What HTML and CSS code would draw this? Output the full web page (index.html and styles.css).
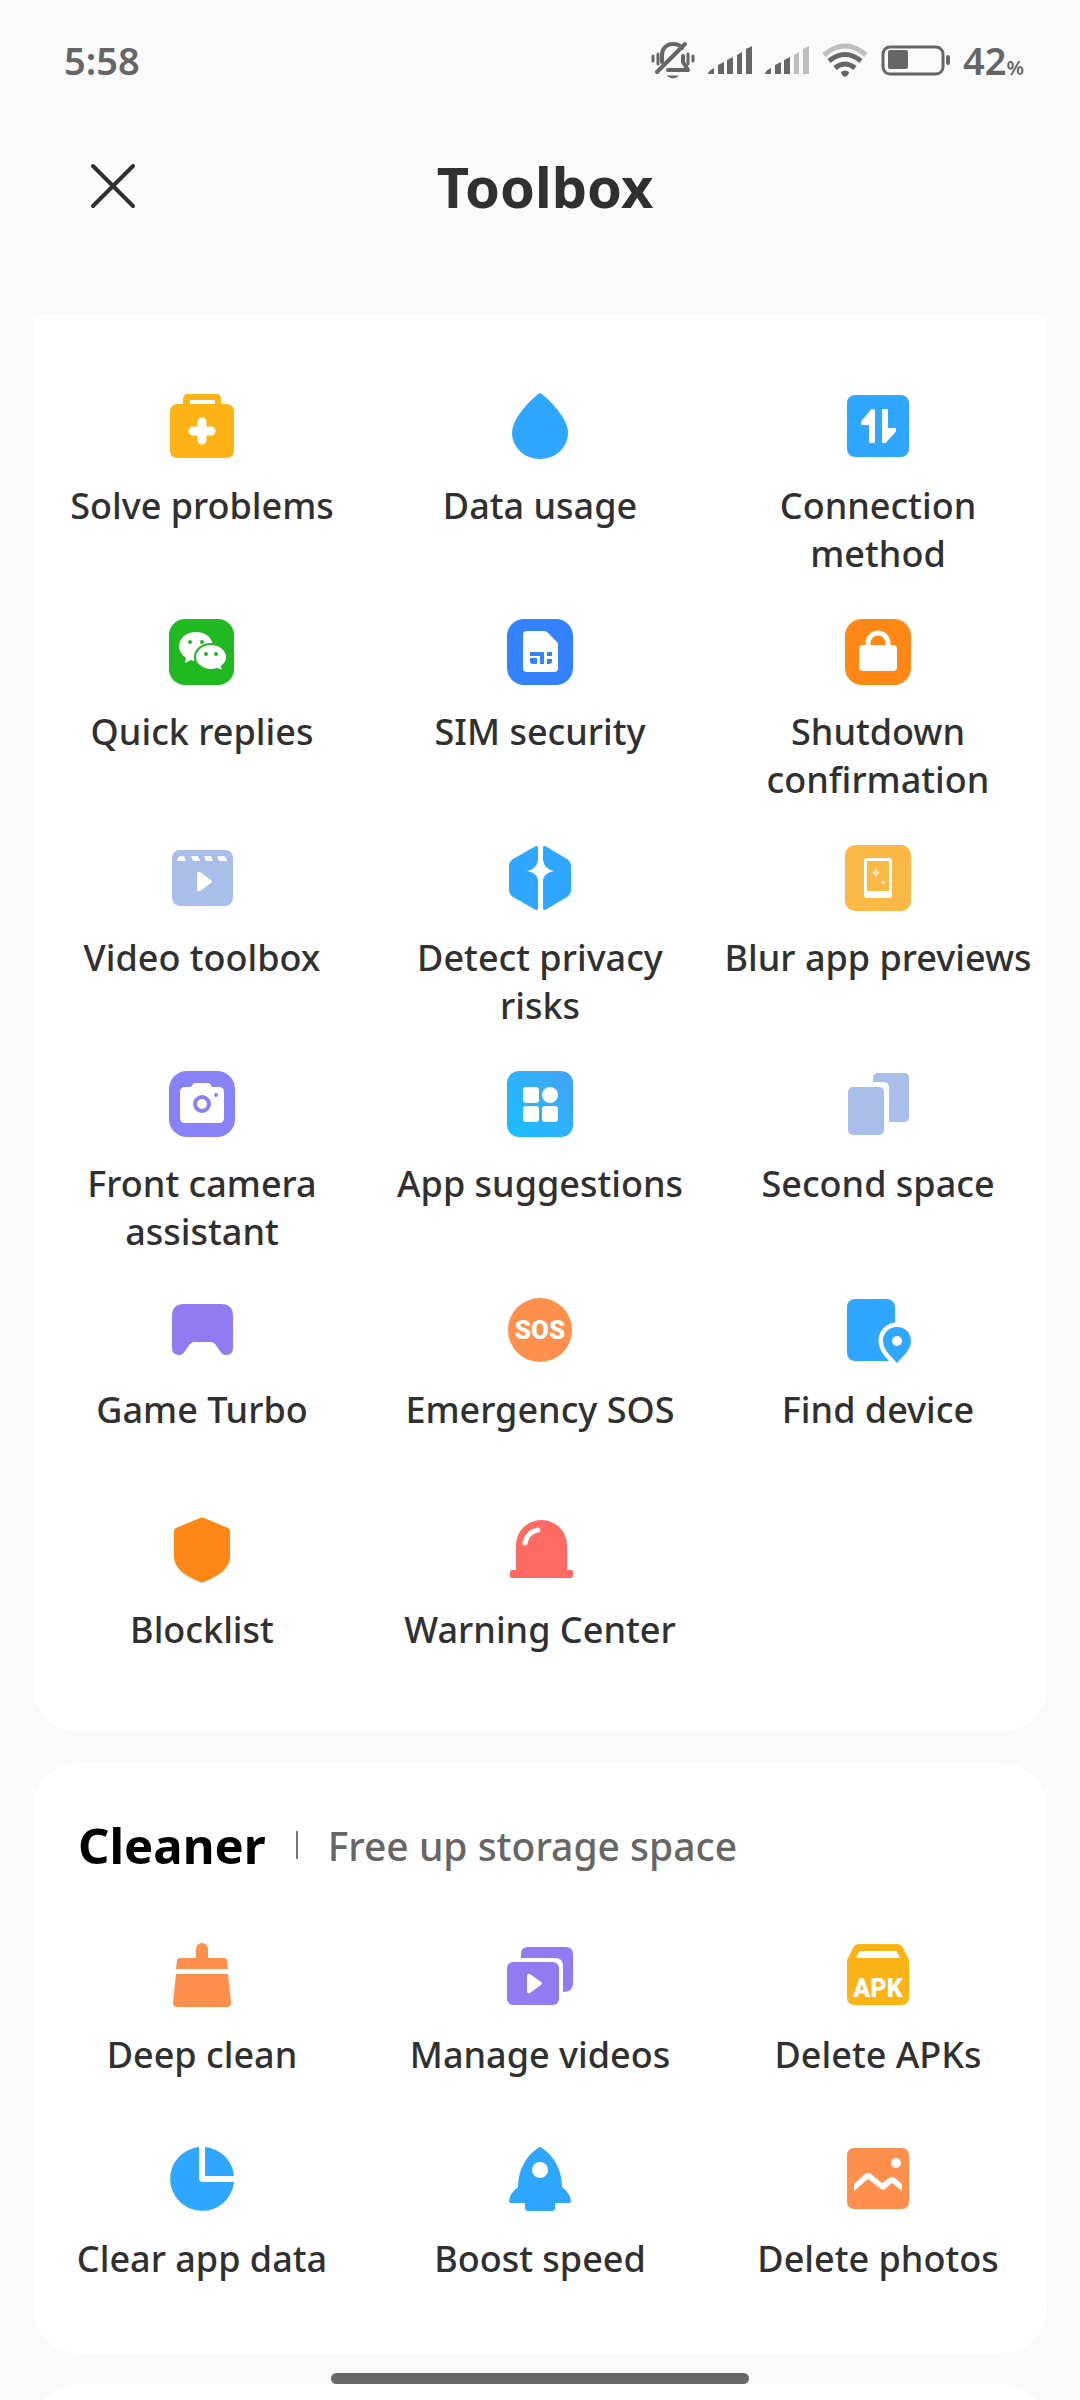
FILE: index.html
```html
<!DOCTYPE html>
<html lang="en">

<head>
    <meta charset="utf-8" />
    <title>Toolbox</title>
    <meta name="viewport" content="width=device-width, initial-scale=1">
    <link rel="stylesheet" href="styles.css">
</head>

<body>
    <div class="status-bar">
        <span class="time">5:58</span>
        <div class="status-icons">
            <svg width="44" height="40" viewBox="0 0 44 40" fill="none" stroke="#666" stroke-width="4" stroke-linecap="round" stroke-linejoin="round">
                <path d="M11 22V15C11 8 16 4 22 4C26 4 29 5 31 8" />
                <path d="M34 4L6 32" />
                <path d="M32 16V22L37 30H17" />
                <path d="M17 36H27Q22 40 17 36Z" fill="#666" stroke-width="1" />
                <path d="M2 16V21M7 14V24M37 14V24M42 16V21" stroke-width="3" />
            </svg>
            <svg width="44" height="40" viewBox="0 0 44 40" fill="#666">
                <path d="M0 34Q0 31 6 28V34ZM10 34V25L16 22V34ZM19 34V20L25 17V34ZM29 34V15L34 12V34ZM38 34V9L44 6V34Z" />
            </svg>
            <svg width="44" height="40" viewBox="0 0 44 40" fill="#666">
                <path d="M0 34Q0 31 6 28V34ZM10 34V25L16 22V34ZM19 34V20L25 17V34Z" />
                <path fill="#bebebe" d="M29 34V15L34 12V34ZM38 34V9L44 6V34Z" />
            </svg>
            <svg width="46" height="40" viewBox="0 0 46 40" fill="none" stroke="#666" stroke-width="5">
                <path d="M2 15Q23 -3 44 15" stroke="#bebebe" />
                <path d="M7 21Q23 8 39 21" />
                <path d="M13 28Q23 20 33 28" />
                <path d="M19 32Q23 29 27 32Q27 35 23 37Q19 35 19 32Z" fill="#666" stroke="none" />
            </svg>
            <svg width="69" height="40" viewBox="0 0 69 40">
                <rect x="2" y="7" width="60" height="27" rx="7" fill="none" stroke="#666" stroke-width="3" />
                <rect x="7" y="10" width="20" height="19" rx="2" fill="#666" />
                <rect x="65" y="15" width="4" height="10" rx="2" fill="#666" />
            </svg>
            <span class="battery">42<small>%</small></span>
        </div>
    </div>

    <header class="title-bar">
        <button class="close" type="button" aria-label="Close">
            <svg width="46" height="46" viewBox="0 0 46 46" fill="none" stroke="#303030" stroke-width="4" stroke-linecap="round">
                <path d="M3 3L43 43M43 3L3 43" />
            </svg>
        </button>
        <h1>Toolbox</h1>
    </header>

    <main>
        <section class="card card-tools">
            <div class="tools">
                <button class="tool" type="button">
                    <svg viewBox="0 0 72 72">
                        <path fill="#fcb316" fill-rule="evenodd" d="M17 14V9Q17 4 22 4H50Q55 4 55 9V14H60Q68 14 68 22V60Q68 68 60 68H12Q4 68 4 60V22Q4 14 12 14ZM24 10V14H49V10Z" />
                        <path d="M36 32V50M27 41H45" stroke="#fff" stroke-width="9" stroke-linecap="round" />
                    </svg>
                    <span>Solve problems</span>
                </button>
                <button class="tool" type="button">
                    <svg viewBox="0 0 72 72">
                        <path fill="#2fa6ff" d="M36 3C40 5 64 26 64 43A28 26 0 0 1 8 43C8 26 32 5 36 3Z" />
                    </svg>
                    <span>Data usage</span>
                </button>
                <button class="tool" type="button">
                    <svg viewBox="0 0 72 72">
                        <rect x="5" y="5" width="62" height="62" rx="8" fill="#2fa6ff" />
                        <path fill="#fff" stroke="#fff" stroke-width="2" stroke-linejoin="round" d="M28 52V34H20V32L30 20H32V52ZM41 20H45V39H53V41L43 52H41Z" />
                    </svg>
                    <span>Connection method</span>
                </button>

                <button class="tool" type="button">
                    <svg viewBox="0 0 72 72">
                        <rect x="3" y="3" width="65" height="66" rx="16" fill="#21b921" />
                        <path fill="#fff" d="M30 16C39.500 16 47 22 47 30.500S39.500 45 30 45Q27 45 25 44L19 47L20 42C16 39 13 35 13 30.500C13 22 20.500 16 30 16Z" />
                        <path fill="#fff" stroke="#21b921" stroke-width="2" d="M45 28C54 28 61 34 61 41Q61 47 56 50L57 55L51 53Q48 54 45 54C36 54 29 48 29 41S36 28 45 28Z" />
                        <g fill="#21b921">
                            <circle cx="24" cy="26" r="2" />
                            <circle cx="36" cy="26" r="2" />
                            <circle cx="40" cy="38" r="2" />
                            <circle cx="50" cy="38" r="2" />
                        </g>
                    </svg>
                    <span>Quick replies</span>
                </button>
                <button class="tool" type="button">
                    <svg viewBox="0 0 72 72">
                        <rect x="3" y="3" width="66" height="66" rx="17" fill="#3482ff" />
                        <path fill="#fff" d="M23 15H40Q42 15 43 16L53 26Q54 27 54 29V52Q54 56 50 56H23Q19 56 19 52V19Q19 15 23 15Z" />
                        <path fill="#3482ff" d="M26 36H40V48H36V40H26ZM26 42H33V48H29Q26 48 26 45ZM43 36H48V40H43ZM43 43H48V45Q48 48 45 48H43Z" />
                    </svg>
                    <span>SIM security</span>
                </button>
                <button class="tool" type="button">
                    <svg viewBox="0 0 72 72">
                        <rect x="3" y="3" width="66" height="66" rx="17" fill="#ff8716" />
                        <rect x="17" y="29" width="38" height="26" rx="4" fill="#fff" />
                        <path d="M26 31V27A10 10 0 0 1 46 27V31" fill="none" stroke="#fff" stroke-width="5" />
                    </svg>
                    <span>Shutdown confirmation</span>
                </button>

                <button class="tool" type="button">
                    <svg viewBox="0 0 72 72">
                        <rect x="6" y="8" width="61" height="56" rx="8" fill="#a9bfe9" />
                        <path fill="#fff" d="M11 19Q12 14 15 14H18L20 19ZM25 14H32L34 19H27ZM38 14H45L47 19H40ZM51 14H57Q60 14 61 19H53Z" />
                        <path fill="#fff" d="M31 32Q31 29 34 30L45 38Q47 39 45 41L34 49Q31 50 31 47Z" />
                    </svg>
                    <span>Video toolbox</span>
                </button>
                <button class="tool" type="button">
                    <svg viewBox="0 0 72 72">
                        <path fill="#2fa6ff" d="M31 4.500Q34 3 34 6V18Q33 27 23 29Q33 31 34 38V66Q34 69 31 67.500L9 55Q5 52 5 48V24Q5 20 9 17ZM42 4.500Q39 3 39 6V18Q40 27 50 29Q40 31 39 38V66Q39 69 42 67.500L63 55Q67 52 67 48V24Q67 20 63 17Z" />
                    </svg>
                    <span>Detect privacy risks</span>
                </button>
                <button class="tool" type="button">
                    <svg viewBox="0 0 72 72">
                        <rect x="3" y="3" width="66" height="66" rx="10" fill="#fab945" />
                        <path fill="#fff" fill-rule="evenodd" d="M25 16H47Q50 16 50 19V53Q50 56 47 56H25Q22 56 22 53V19Q22 16 25 16ZM25 19V49H47V19Z" />
                        <path fill="#fde3b4" d="M34 25Q35 30 39 31Q35 32 34 37Q33 32 29 31Q33 30 34 25ZM41 37Q41 40 44 40Q41 41 41 44Q41 41 38 40Q41 40 41 37Z" />
                    </svg>
                    <span>Blur app previews</span>
                </button>

                <button class="tool" type="button">
                    <svg viewBox="0 0 72 72">
                        <rect x="3" y="3" width="66" height="66" rx="18" fill="#8782f8" />
                        <path fill="#fff" d="M19 19H25L27 16Q28 15 29 15H42Q44 15 45 17L46 19H53Q58 19 58 24V50Q58 55 53 55H19Q14 55 14 50V24Q14 19 19 19Z" />
                        <circle cx="36" cy="36" r="7" fill="none" stroke="#8782f8" stroke-width="4" />
                        <circle cx="50" cy="27" r="2" fill="#8782f8" />
                    </svg>
                    <span>Front camera assistant</span>
                </button>
                <button class="tool" type="button">
                    <svg viewBox="0 0 72 72">
                        <defs>
                            <linearGradient id="apps" x1="0" y1="1" x2="1" y2="0">
                                <stop offset="0" stop-color="#18c0ff" />
                                <stop offset="1" stop-color="#44a2f8" />
                            </linearGradient>
                        </defs>
                        <rect x="3" y="3" width="66" height="66" rx="12" fill="url(#apps)" />
                        <g fill="#fff">
                            <rect x="19" y="19" width="16" height="16" rx="3" />
                            <circle cx="46" cy="27" r="8" />
                            <rect x="19" y="38" width="16" height="16" rx="3" />
                            <rect x="38" y="38" width="16" height="16" rx="3" />
                        </g>
                    </svg>
                    <span>App suggestions</span>
                </button>
                <button class="tool" type="button">
                    <svg viewBox="0 0 72 72" fill="#a9bfe9">
                        <path d="M31 14V10Q31 5 36 5H62Q67 5 67 10V49Q67 54 62 54H47V20Q47 14 41 14Z" />
                        <rect x="6" y="19" width="36" height="48" rx="5" />
                    </svg>
                    <span>Second space</span>
                </button>

                <button class="tool" type="button">
                    <svg viewBox="0 0 72 72">
                        <path fill="#927bf2" d="M18 10H55Q67 10 67 22V54Q67 61 60 61Q56 61 54 57L49 50Q47 48 45 48H28Q26 48 24 50L19 57Q17 61 13 61Q6 61 6 54V22Q6 10 18 10Z" />
                    </svg>
                    <span>Game Turbo</span>
                </button>
                <button class="tool" type="button">
                    <svg viewBox="0 0 72 72">
                        <circle cx="36" cy="36" r="32" fill="#ff8f4d" />
                        <text class="icon-text" x="36" y="45" font-size="26">SOS</text>
                    </svg>
                    <span>Emergency SOS</span>
                </button>
                <button class="tool" type="button">
                    <svg viewBox="0 0 72 72">
                        <rect x="5" y="5" width="48" height="62" rx="8" fill="#2fa6ff" />
                        <path fill="#2fa6ff" stroke="#fff" stroke-width="9" paint-order="stroke" d="M55 33C63 33 69 39 69 47C69 56 60 63 55 69C50 63 41 56 41 47C41 39 47 33 55 33Z" />
                        <circle cx="55" cy="47" r="5" fill="#fff" />
                    </svg>
                    <span>Find device</span>
                </button>

                <button class="tool" type="button">
                    <svg viewBox="0 0 72 72">
                        <path fill="#ff8716" d="M34 4Q36 3 38 4L62 14Q64 15 64 17V42C64 55 52 62 38 68Q36 69 34 68C20 62 8 55 8 42V17Q8 15 10 14Z" />
                    </svg>
                    <span>Blocklist</span>
                </button>
                <button class="tool" type="button">
                    <svg viewBox="0 0 72 72">
                        <path fill="#ff6b64" d="M12 56V31A25.500 25 0 0 1 63 31V56H67Q69 56 69 58V62Q69 64 67 64H8Q6 64 6 62V58Q6 56 8 56Z" />
                        <path d="M21 29Q23 18 34 16" fill="none" stroke="#fff" stroke-width="5" stroke-linecap="round" />
                    </svg>
                    <span>Warning Center</span>
                </button>
            </div>
        </section>

        <section class="card card-cleaner">
            <div class="card-head">
                <h2>Cleaner</h2>
                <p>Free up storage space</p>
            </div>
            <div class="tools">
                <button class="tool" type="button">
                    <svg viewBox="0 0 72 72" fill="#ff8f4d">
                        <path d="M10 30L11 22Q11 19 14 19H30V10A6 6 0 0 1 42 10V19H58Q61 19 61 22L62 30ZM10 35H62L65 64Q65 68 61 68H11Q7 68 7 64Z" />
                    </svg>
                    <span>Deep clean</span>
                </button>
                <button class="tool" type="button">
                    <svg viewBox="0 0 72 72" fill="#927bf2">
                        <path d="M17 19V15Q17 8 24 8H62Q69 8 69 15V44Q69 53 59 53V27Q59 19 51 19Z" />
                        <rect x="3" y="23" width="52" height="43" rx="6" />
                        <path fill="#fff" d="M23 37Q23 34 26 35L37 43Q39 44 37 46L26 54Q23 55 23 52Z" />
                    </svg>
                    <span>Manage videos</span>
                </button>
                <button class="tool" type="button">
                    <svg viewBox="0 0 72 72">
                        <path fill="#fcb316" fill-rule="evenodd" d="M17 5H55Q59 5 61 9L67 21V58Q67 66 59 66H13Q5 66 5 58V21L11 9Q13 5 17 5ZM18 12Q17 12 17 13L14 19H58L55 13Q55 12 54 12Z" />
                        <text class="icon-text" x="36" y="58" font-size="25">APK</text>
                    </svg>
                    <span>Delete APKs</span>
                </button>

                <button class="tool" type="button">
                    <svg viewBox="0 0 72 72" fill="#2fa6ff">
                        <path d="M33 4A32 32 0 1 0 68 39H37Q33 39 33 35ZM39 4A32 32 0 0 1 68 33H39Z" />
                    </svg>
                    <span>Clear app data</span>
                </button>
                <button class="tool" type="button">
                    <svg viewBox="0 0 72 72">
                        <path fill="#2fa6ff" d="M34 5Q36 3 38 5C50 13 58 27 58 44Q66 50 67 58Q67 60 65 60H51V66Q50 68 48 68H24Q22 68 21 66V60H7Q5 60 5 58Q6 50 14 44C14 27 22 13 34 5Z" />
                        <circle cx="36" cy="27" r="8" fill="#fff" />
                    </svg>
                    <span>Boost speed</span>
                </button>
                <button class="tool" type="button">
                    <svg viewBox="0 0 72 72">
                        <rect x="5" y="5" width="62" height="61" rx="7" fill="#ff8f4d" />
                        <circle cx="54" cy="20" r="5" fill="#fff" />
                        <path fill="#fff" d="M12 41L23 31Q26 29 29 31L40 40L47 35Q50 33 53 35L60 41V48L50 40L43 46Q41 47 39 46L26 36L12 48Z" />
                    </svg>
                    <span>Delete photos</span>
                </button>
            </div>
        </section>

        <section class="card card-next"></section>
    </main>

    <div class="home-indicator"></div>
</body>

</html>
```

FILE: styles.css
```css
* {
    box-sizing: border-box;
}

body {
    margin: 0;
    height: 100vh;
    overflow: hidden;
    display: flex;
    flex-direction: column;
    background-color: #fafafa;
    color: #303030;
    font-family: "Noto Sans", "Open Sans", sans-serif;
}

button {
    border: none;
    padding: 0;
    background: none;
    color: inherit;
    font-family: inherit;
    cursor: pointer;
}

svg {
    display: block;
    flex-shrink: 0;
}

/* status bar */

.status-bar {
    display: flex;
    flex-shrink: 0;
    justify-content: space-between;
    align-items: center;
    height: 120px;
    padding: 0 56px 0 64px;
    color: #666;
    font-size: 38px;
    font-weight: 600;
}

.status-icons {
    display: flex;
    align-items: center;
    gap: 13px;
}

.battery small {
    font-size: 20px;
}

/* title */

.title-bar {
    display: grid;
    flex-shrink: 0;
    grid-template-columns: 1fr auto 1fr;
    align-items: center;
    height: 132px;
    margin-bottom: 63px;
    padding: 0 80px 0 90px;
}

.close {
    justify-self: start;
}

h1 {
    margin: 0;
    font-size: 56px;
    font-weight: 700;
}

/* cards */

main {
    flex: 1;
    min-height: 0;
    overflow: hidden;
    padding: 0 33px;
}

.card {
    margin-bottom: 31px;
    border-radius: 45px;
    background-color: white;
}

.card-tools {
    padding: 75px 0 36px;
    border-top-left-radius: 0;
    border-top-right-radius: 0;
}

.card-cleaner {
    padding: 48px 0 44px;
}

.card-next {
    height: 300px;
}

.card-head {
    display: flex;
    align-items: center;
    height: 68px;
    margin-bottom: 60px;
    padding-left: 45px;
}

h2 {
    margin: 0;
    color: black;
    font-size: 49px;
    font-weight: 700;
}

.card-head p {
    display: flex;
    align-items: center;
    margin: 0;
    color: #666;
    font-size: 39px;
    font-weight: 500;
}

.card-head p::before {
    content: "";
    width: 2px;
    height: 28px;
    margin: 0 30px;
    background-color: #777;
}

.tools {
    display: grid;
    grid-template-columns: repeat(3, 1fr);
    row-gap: 38px;
}

.tool {
    display: flex;
    flex-direction: column;
    align-items: center;
    gap: 20px;
    min-height: 182px;
    padding: 0 12px;
    font-size: 36px;
    font-weight: 500;
    line-height: 48px;
}

.card-cleaner .tool {
    min-height: 166px;
}

.tool svg {
    width: 72px;
    height: 72px;
}

.icon-text {
    fill: white;
    font-family: Roboto, sans-serif;
    font-weight: 900;
    text-anchor: middle;
}

.home-indicator {
    position: fixed;
    bottom: 16px;
    left: 50%;
    width: 418px;
    height: 11px;
    margin-left: -209px;
    border-radius: 6px;
    background-color: #686868;
}
```
